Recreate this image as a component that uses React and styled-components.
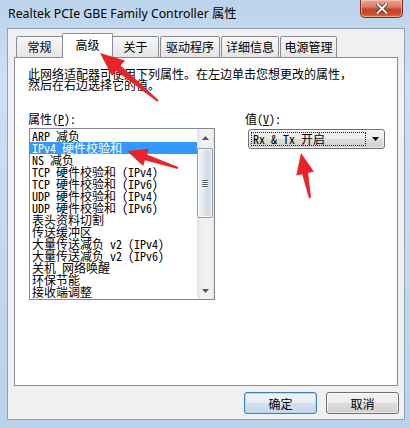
import React from 'react';
import styled, { createGlobalStyle } from 'styled-components';

const GlobalStyle = createGlobalStyle`
  html, body {
    margin: 0;
    padding: 0;
    background: #c6dbf0;
  }
  body {
    font-family: "Noto Sans CJK SC", "Noto Sans", sans-serif;
    font-size: 12px;
    color: #000;
  }
`;

const MONO = `"Noto Sans Mono CJK SC", "Liberation Mono", "Noto Sans CJK SC", monospace`;

const Window = styled.div`
  position: relative;
  width: 410px;
  height: 428px;
  display: flex;
  flex-direction: column;
  overflow: hidden;
  background: linear-gradient(180deg, #bcd3ec 0%, #cde0f3 18%, #c4d9ef 60%, #bad1ea 100%);
`;

const TitleBar = styled.div`
  height: 28px;
  display: flex;
  align-items: flex-start;
  padding-left: 8px;
  flex-shrink: 0;
`;

const TitleText = styled.div`
  margin-top: 6px;
  line-height: 16px;
  font-family: "Noto Sans", "Noto Sans CJK SC", sans-serif;
  font-size: 12.3px;
  color: #000;
`;

const CloseButton = styled.div`
  margin-left: auto;
  margin-right: 7px;
  width: 43px;
  height: 18px;
  box-sizing: border-box;
  border: 1px solid #7a2c22;
  border-top: none;
  border-radius: 0 0 5px 5px;
  background: linear-gradient(180deg, #e8a898 0%, #db7b66 40%, #c7432a 55%, #cc4a2c 80%, #e0704a 100%);
  box-shadow: inset 0 0 0 1px rgba(255, 220, 210, 0.5);
  display: flex;
  align-items: center;
  justify-content: center;
`;

const Client = styled.div`
  flex: 1;
  margin: 0 5px 8px 7px;
  background: #f0f0f0;
  border: 1px solid #8ea2bb;
  display: flex;
  flex-direction: column;
  padding: 4px 0 5px 0;
`;

const TabStrip = styled.div`
  display: flex;
  align-items: flex-end;
  gap: 1px;
  padding-left: 8px;
  margin-bottom: -1px;
  position: relative;
  z-index: 1;
`;

const Tab = styled.div`
  width: ${(p) => p.$w}px;
  height: ${(p) => (p.$active ? 25 : 22)}px;
  box-sizing: border-box;
  border: 1px solid #898c95;
  border-bottom: ${(p) => (p.$active ? 'none' : '1px solid #898c95')};
  border-radius: 2px 2px 0 0;
  margin: ${(p) => (p.$active ? '0 -2px' : '0')};
  background: ${(p) => (p.$active ? '#fff' : 'linear-gradient(180deg, #f7f7f7 0%, #efefef 50%, #e4e4e4 100%)')};
  display: flex;
  align-items: center;
  justify-content: center;
  padding-bottom: ${(p) => (p.$active ? 3 : 0)}px;
  font-size: 12px;
  line-height: 12px;
  position: relative;
  z-index: ${(p) => (p.$active ? 2 : 1)};
`;

const Panel = styled.div`
  margin-left: 6px;
  width: 384px;
  height: 329px;
  box-sizing: border-box;
  border: 1px solid #898c95;
  background: #fff;
  padding: 10px 13px 0;
`;

const Description = styled.div`
  width: 330px;
  font-size: 12px;
  line-height: 11px;
`;

const PropertyGrid = styled.div`
  display: grid;
  grid-template-columns: 187px 140px;
  column-gap: 30px;
  margin-top: 23px;
`;

const Column = styled.div`
  display: flex;
  flex-direction: column;
`;

const Label = styled.div`
  font-family: ${MONO};
  font-size: 12px;
  line-height: 12px;
  height: 12px;
`;

const ListBox = styled.div`
  margin: 3px 0 0 1px;
  width: 186px;
  height: 172px;
  box-sizing: border-box;
  border: 1px solid #828790;
  background: #fff;
  display: flex;
`;

const Items = styled.div`
  flex: 1;
  padding-top: 1px;
  overflow: hidden;
`;

const Item = styled.div`
  height: 12px;
  line-height: 12px;
  padding-left: 2px;
  font-family: ${MONO};
  font-size: 12px;
  white-space: pre;
  background: ${(p) => (p.$selected ? '#3399ff' : 'transparent')};
  color: ${(p) => (p.$selected ? '#fff' : '#000')};
`;

const Scrollbar = styled.div`
  width: 17px;
  display: flex;
  flex-direction: column;
  background: linear-gradient(90deg, #e4e4e4 0%, #f1f1f1 30%, #f1f1f1 80%, #e8e8e8 100%);
`;

const ScrollButton = styled.div`
  height: 17px;
  display: flex;
  align-items: center;
  justify-content: center;
`;

const ScrollTrack = styled.div`
  flex: 1;
  padding-top: 2px;
`;

const Thumb = styled.div`
  margin: 0 1px 0 0;
  height: 70px;
  box-sizing: border-box;
  border: 1px solid #979da5;
  border-radius: 2px;
  background: linear-gradient(90deg, #f2f4f6 0%, #e3e8ed 45%, #d3dae2 55%, #dbe0e6 100%);
  box-shadow: inset 0 0 0 1px rgba(255, 255, 255, 0.7);
  display: flex;
  flex-direction: column;
  align-items: center;
  justify-content: center;
  gap: 1px;
`;

const Grip = styled.div`
  width: 6px;
  height: 1px;
  background: #5a6470;
  box-shadow: 0 1px 0 #fff;
`;

const Dropdown = styled.div`
  margin: 4px 0 0 3px;
  width: 137px;
  height: 20px;
  box-sizing: border-box;
  border: 1px solid #707070;
  border-radius: 3px;
  background: linear-gradient(180deg, #f2f2f2 0%, #ebebeb 50%, #dddddd 50%, #cfcfcf 100%);
  box-shadow: inset 0 0 0 1px rgba(255, 255, 255, 0.6);
  display: flex;
  align-items: center;
  padding-left: 2px;
`;

const FocusBox = styled.div`
  width: 115px;
  height: 14px;
  box-sizing: border-box;
  border: 1px dotted #222;
  font-family: ${MONO};
  font-size: 12px;
  line-height: 12px;
  padding-left: 1px;
  white-space: pre;
`;

const DropArrow = styled.div`
  flex: 1;
  display: flex;
  align-items: center;
  justify-content: center;
`;

const ButtonRow = styled.div`
  display: flex;
  justify-content: flex-end;
  gap: 9px;
  margin-top: 6px;
  padding-right: 5px;
`;

const Button = styled.div`
  width: 73px;
  height: 22px;
  box-sizing: border-box;
  border: 1px solid ${(p) => (p.$primary ? '#3c7fb1' : '#707070')};
  border-radius: 3px;
  background: ${(p) =>
    p.$primary
      ? 'linear-gradient(180deg, #eef5fa 0%, #e4eef6 50%, #d4e2ee 50%, #c6d7e6 100%)'
      : 'linear-gradient(180deg, #f2f2f2 0%, #ebebeb 50%, #dddddd 50%, #cfcfcf 100%)'};
  box-shadow: inset 0 0 0 1px ${(p) => (p.$primary ? 'rgba(170, 220, 250, 0.9)' : 'rgba(255, 255, 255, 0.6)')};
  display: flex;
  align-items: center;
  justify-content: center;
  font-size: 12px;
`;

const Overlay = styled.svg`
  position: absolute;
  left: 0;
  top: 0;
  pointer-events: none;
  z-index: 10;
`;

const tabs = [
  { label: '常规', w: 47 },
  { label: '高级', w: 51, active: true },
  { label: '关于', w: 47 },
  { label: '驱动程序', w: 60 },
  { label: '详细信息', w: 58 },
  { label: '电源管理', w: 57 },
];

const properties = [
  'ARP 减负',
  'IPv4 硬件校验和',
  'NS 减负',
  'TCP 硬件校验和 (IPv4)',
  'TCP 硬件校验和 (IPv6)',
  'UDP 硬件校验和 (IPv4)',
  'UDP 硬件校验和 (IPv6)',
  '表头资料切割',
  '传送缓冲区',
  '大量传送减负 v2 (IPv4)',
  '大量传送减负 v2 (IPv6)',
  '关机 网络唤醒',
  '环保节能',
  '接收端调整',
];

// red annotation arrows drawn over the dialog
function arrowPoints(tail, tip, headLen, headHalf, shaftTail, shaftHead) {
  const dx = tip[0] - tail[0];
  const dy = tip[1] - tail[1];
  const len = Math.hypot(dx, dy);
  const ux = dx / len;
  const uy = dy / len;
  const px = -uy;
  const py = ux;
  const bx = tip[0] - ux * headLen;
  const by = tip[1] - uy * headLen;
  const pts = [
    [tail[0] + px * shaftTail / 2, tail[1] + py * shaftTail / 2],
    [bx + px * shaftHead / 2, by + py * shaftHead / 2],
    [bx + px * headHalf, by + py * headHalf],
    tip,
    [bx - px * headHalf, by - py * headHalf],
    [bx - px * shaftHead / 2, by - py * shaftHead / 2],
    [tail[0] - px * shaftTail / 2, tail[1] - py * shaftTail / 2],
  ];
  return pts.map((p) => p[0].toFixed(1) + ',' + p[1].toFixed(1)).join(' ');
}

const arrows = [
  { tail: [158, 101], tip: [100, 53], head: 24, half: 10, st: 2, sh: 7 },
  { tail: [178, 168], tip: [127, 151], head: 20, half: 9, st: 2, sh: 6 },
  { tail: [310, 198], tip: [301, 153], head: 21, half: 9, st: 2, sh: 6 },
];

function UpArrow() {
  return (
    <svg width="7" height="4" viewBox="0 0 7 4">
      <path d="M0 4 L3.5 0 L7 4 Z" fill="#4d5560" />
    </svg>
  );
}

function DownArrow({ color = '#4d5560' }) {
  return (
    <svg width="7" height="4" viewBox="0 0 7 4">
      <path d="M0 0 L7 0 L3.5 4 Z" fill={color} />
    </svg>
  );
}

export default function App() {
  return (
    <>
      <GlobalStyle />
      <Window>
        <TitleBar>
          <TitleText>Realtek PCIe GBE Family Controller 属性</TitleText>
          <CloseButton>
            <svg width="12" height="11" viewBox="0 0 12 11">
              <path
                d="M1.5 1 L10.5 10 M10.5 1 L1.5 10"
                stroke="#5a2018"
                strokeWidth="3.6"
                strokeLinecap="round"
              />
              <path
                d="M1.5 1 L10.5 10 M10.5 1 L1.5 10"
                stroke="#fff"
                strokeWidth="2"
                strokeLinecap="round"
              />
            </svg>
          </CloseButton>
        </TitleBar>

        <Client>
          <TabStrip>
            {tabs.map((t) => (
              <Tab key={t.label} $w={t.w} $active={t.active}>
                {t.label}
              </Tab>
            ))}
          </TabStrip>

          <Panel>
            <Description>
              此网络适配器可使用下列属性。在左边单击您想更改的属性，然后在右边选择它的值。
            </Description>

            <PropertyGrid>
              <Column>
                <Label>
                  属性(<u>P</u>):
                </Label>
                <ListBox>
                  <Items>
                    {properties.map((name, i) => (
                      <Item key={name} $selected={i === 1}>
                        {name}
                      </Item>
                    ))}
                  </Items>
                  <Scrollbar>
                    <ScrollButton>
                      <UpArrow />
                    </ScrollButton>
                    <ScrollTrack>
                      <Thumb>
                        <Grip />
                        <Grip />
                        <Grip />
                        <Grip />
                      </Thumb>
                    </ScrollTrack>
                    <ScrollButton>
                      <DownArrow />
                    </ScrollButton>
                  </Scrollbar>
                </ListBox>
              </Column>

              <Column>
                <Label>
                  值(<u>V</u>):
                </Label>
                <Dropdown>
                  <FocusBox>Rx &amp; Tx 开启</FocusBox>
                  <DropArrow>
                    <DownArrow color="#000" />
                  </DropArrow>
                </Dropdown>
              </Column>
            </PropertyGrid>
          </Panel>

          <ButtonRow>
            <Button $primary>确定</Button>
            <Button>取消</Button>
          </ButtonRow>
        </Client>

        <Overlay width="410" height="428" viewBox="0 0 410 428">
          {arrows.map((a, i) => (
            <polygon
              key={i}
              points={arrowPoints(a.tail, a.tip, a.head, a.half, a.st, a.sh)}
              fill="#e8242a"
            />
          ))}
        </Overlay>
      </Window>
    </>
  );
}
